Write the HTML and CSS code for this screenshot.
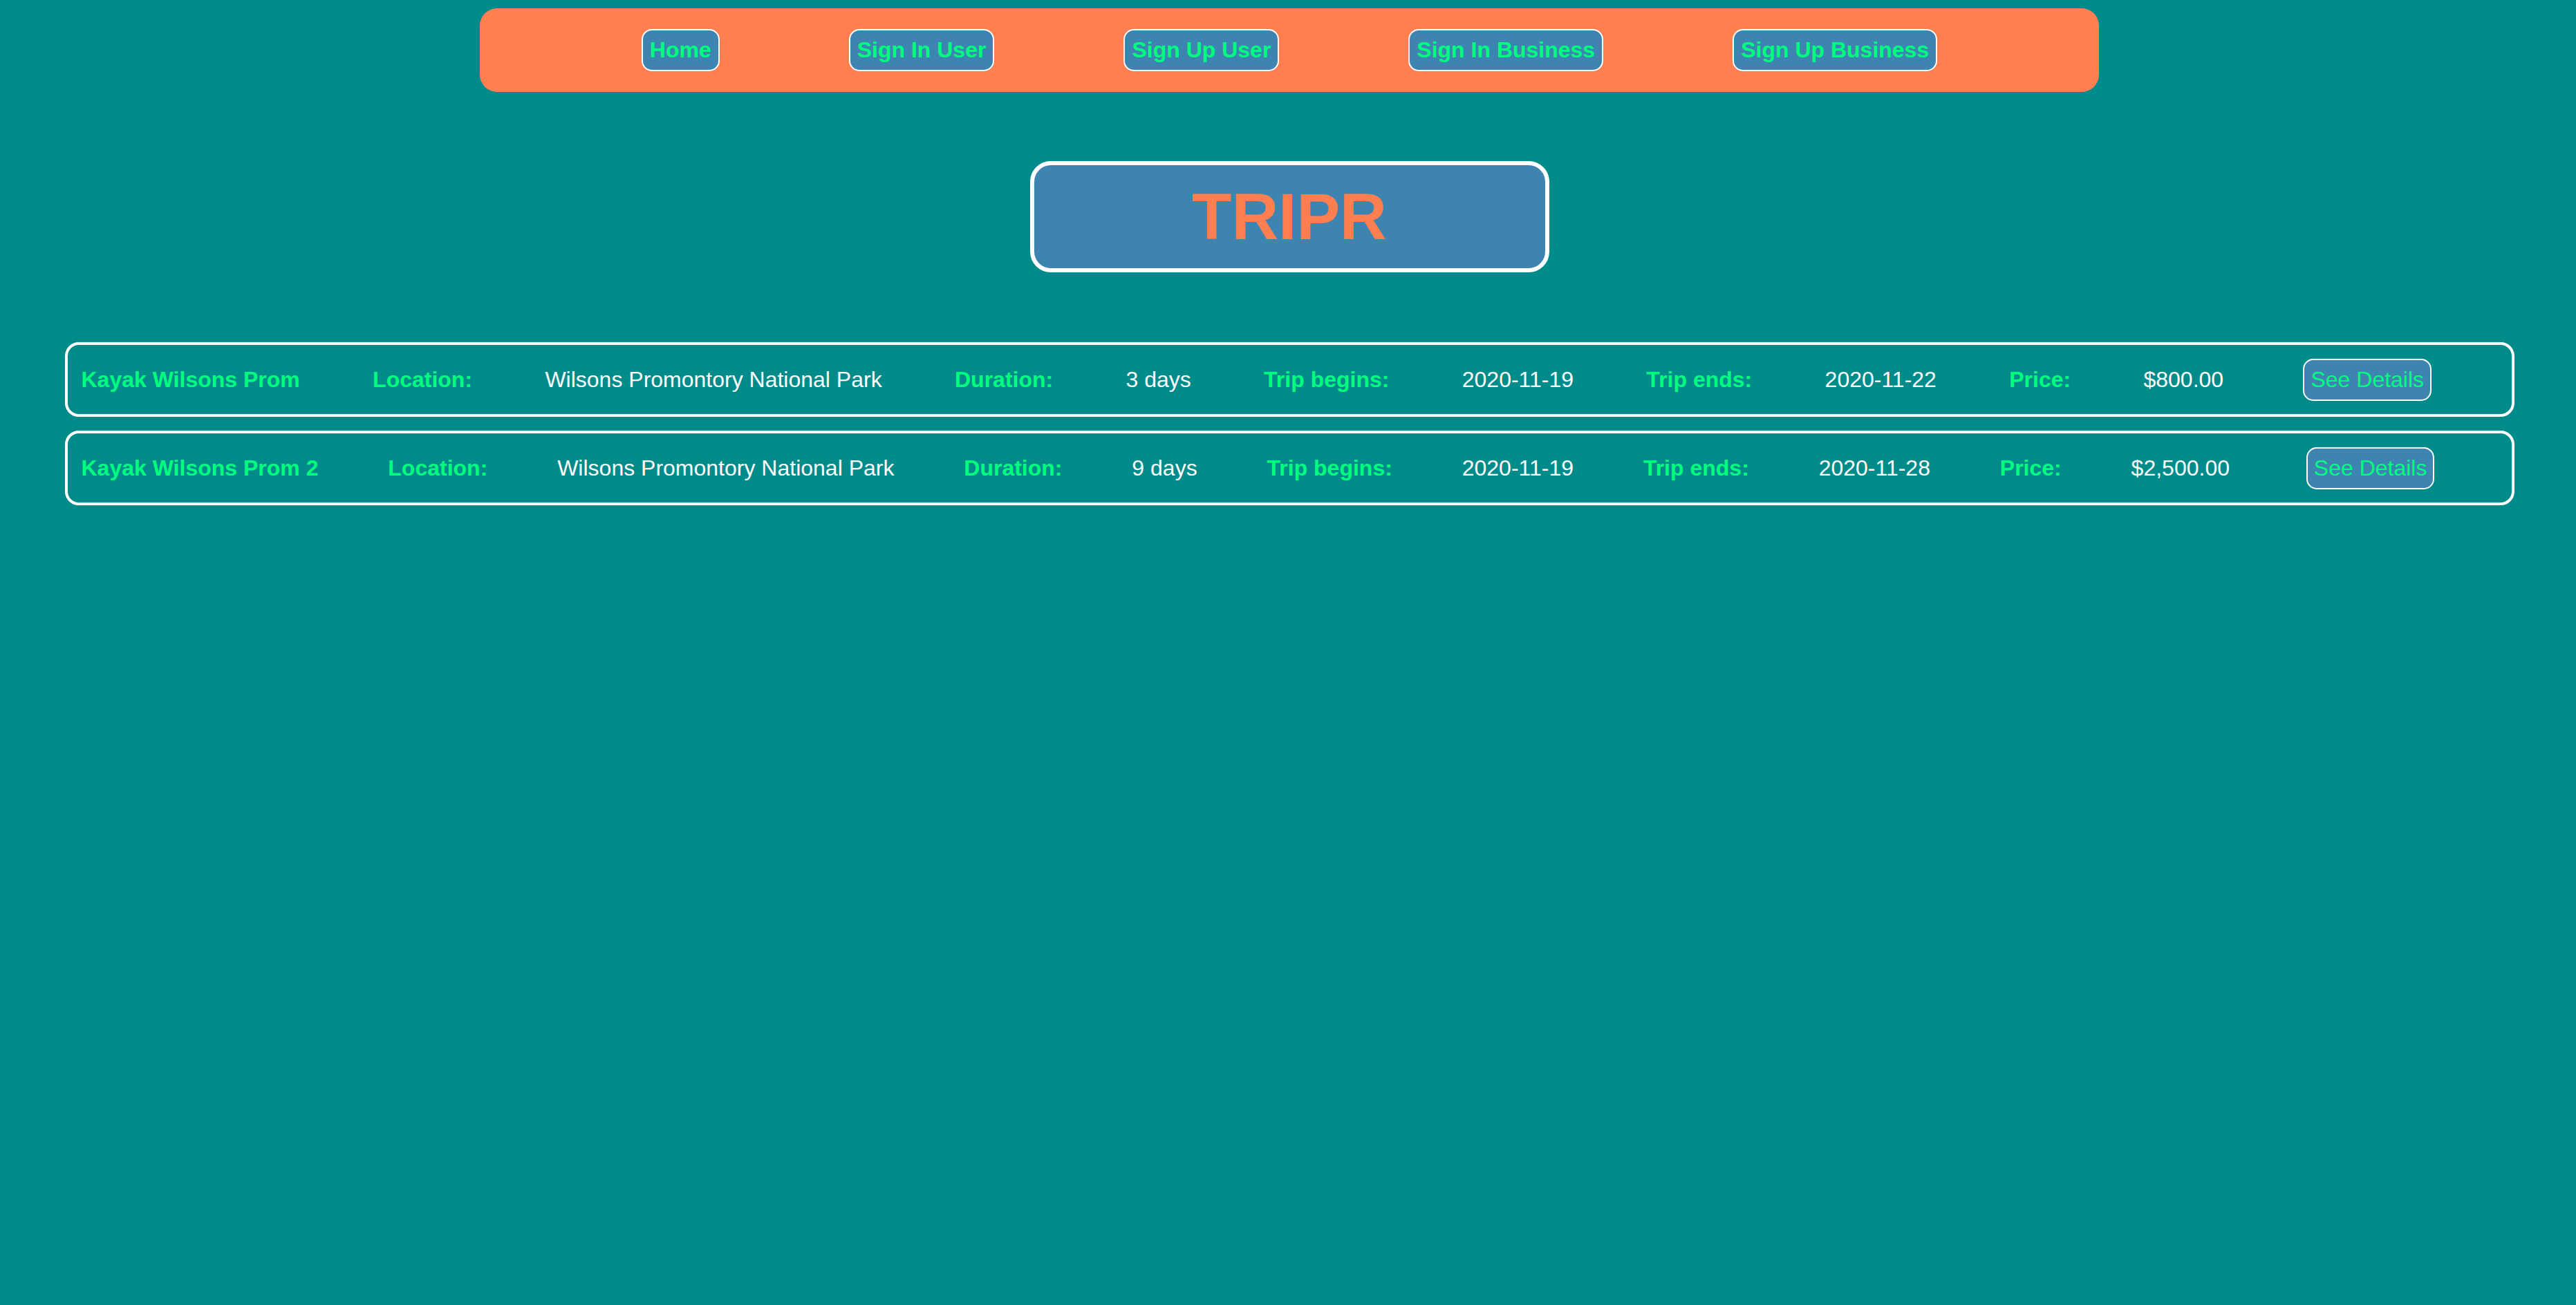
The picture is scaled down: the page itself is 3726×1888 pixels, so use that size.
FILE: index.html
```html
<!DOCTYPE html>
<html lang="en">
<head>
<meta charset="utf-8">
<title>TRIPR</title>
<link rel="stylesheet" href="styles.css">
</head>
<body>
<div class="page">
  <nav class="nav">
    <a class="nav-btn" href="#">Home</a>
    <a class="nav-btn" href="#">Sign In User</a>
    <a class="nav-btn" href="#">Sign Up User</a>
    <a class="nav-btn" href="#">Sign In Business</a>
    <a class="nav-btn" href="#">Sign Up Business</a>
  </nav>
  <h1 class="logo">TRIPR</h1>
  <div class="trips">
    <div class="trip">
      <span class="trip-name">Kayak Wilsons Prom</span>
      <span class="label">Location:</span>
      <span class="value">Wilsons Promontory National Park</span>
      <span class="label">Duration:</span>
      <span class="value">3 days</span>
      <span class="label">Trip begins:</span>
      <span class="value">2020-11-19</span>
      <span class="label">Trip ends:</span>
      <span class="value">2020-11-22</span>
      <span class="label">Price:</span>
      <span class="value">$800.00</span>
      <button class="details">See Details</button>
    </div>
    <div class="trip">
      <span class="trip-name">Kayak Wilsons Prom 2</span>
      <span class="label">Location:</span>
      <span class="value">Wilsons Promontory National Park</span>
      <span class="label">Duration:</span>
      <span class="value">9 days</span>
      <span class="label">Trip begins:</span>
      <span class="value">2020-11-19</span>
      <span class="label">Trip ends:</span>
      <span class="value">2020-11-28</span>
      <span class="label">Price:</span>
      <span class="value">$2,500.00</span>
      <button class="details">See Details</button>
    </div>
  </div>
</div>
</body>
</html>
```
FILE: styles.css
```css
html, body {
  margin: 0;
  padding: 0;
  background: #008b8b;
  font-family: "Liberation Sans", Arial, sans-serif;
}

.page {
  padding-top: 12px;
  padding-left: 4px;
  display: flex;
  flex-direction: column;
  align-items: center;
}

.nav {
  width: 2342px;
  box-sizing: border-box;
  background: #ff7f50;
  border-radius: 25px;
  padding: 30px 0;
  display: flex;
  justify-content: center;
  gap: 187px;
}

.nav-btn {
  display: block;
  font-size: 32px;
  font-weight: bold;
  line-height: 37px;
  color: #00ff7f;
  text-decoration: none;
  background: #3d84b1;
  border: 2px solid #ffffff;
  border-radius: 15px;
  padding: 10px 10px;
}

.logo {
  margin: 100px 0 101px;
  width: 751px;
  height: 161px;
  box-sizing: border-box;
  border: 6px solid #ffffff;
  border-radius: 30px;
  background: #3d84b1;
  color: #ff7f50;
  font-size: 94px;
  font-weight: bold;
  display: flex;
  align-items: center;
  justify-content: center;
}

.trips {
  width: 3543px;
  display: flex;
  flex-direction: column;
  gap: 20px;
}

.trip {
  box-sizing: border-box;
  height: 108px;
  border: 4px solid #ffffff;
  border-radius: 20px;
  padding: 0 0 0 20px;
  display: flex;
  align-items: center;
  justify-content: space-between;
  font-size: 32px;
  line-height: 37px;
}

.trip::after {
  content: "";
  width: 0;
}

.trip-name,
.label {
  color: #00ff7f;
  font-weight: bold;
}

.value {
  color: #ffffff;
}

.details {
  font-family: "Liberation Sans", Arial, sans-serif;
  font-size: 32px;
  line-height: 37px;
  color: #00ff7f;
  background: #3d84b1;
  border: 2px solid #ffffff;
  border-radius: 15px;
  padding: 10px 9px;
  margin: 0 10px;
}
```
